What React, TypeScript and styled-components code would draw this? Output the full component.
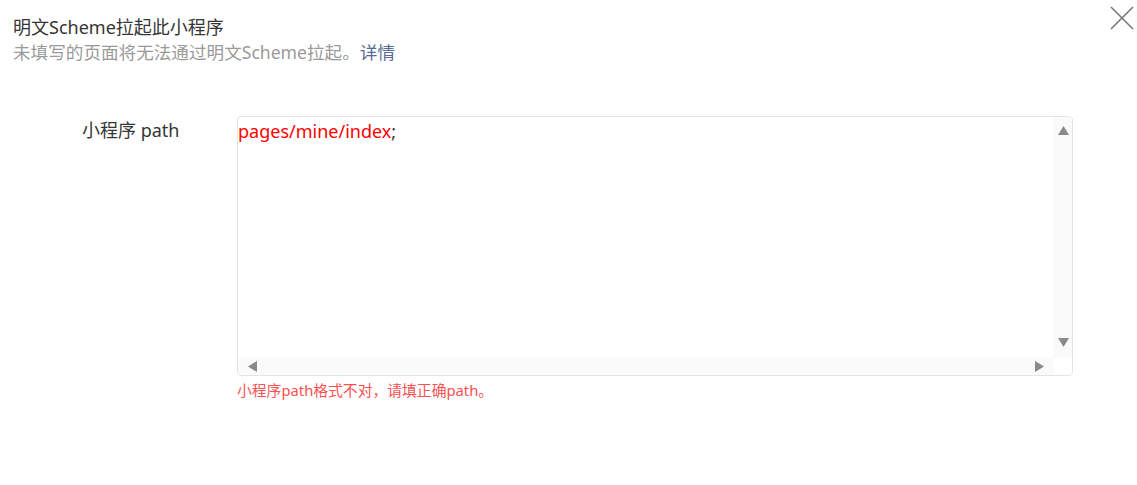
import React from "react";
import styled, { createGlobalStyle } from "styled-components";

const Global = createGlobalStyle`
  html, body { margin: 0; padding: 0; background: #fff; }
  body { font-family: "Noto Sans", "Noto Sans CJK SC", sans-serif; }
`;

const Page = styled.div`
  position: relative;
  width: 1137px;
  height: 485px;
  box-sizing: border-box;
  padding: 14px 0 0 13px;
`;

const Header = styled.header`
  display: flex;
  flex-direction: column;
`;

const Title = styled.h1`
  margin: 0;
  font-size: 18px;
  font-weight: 400;
  line-height: 26px;
  color: #353535;
`;

const Desc = styled.p`
  margin: 0;
  font-size: 17.6px;
  line-height: 25px;
  color: #9a9a9a;
`;

const Link = styled.a`
  color: #576b95;
  text-decoration: none;
`;

const Close = styled.button`
  position: absolute;
  top: 6px;
  right: 3px;
  width: 24px;
  height: 24px;
  padding: 0;
  border: none;
  background: none;
  cursor: pointer;
`;

const Form = styled.div`
  display: grid;
  grid-template-columns: 155px 836px;
  margin: 51px 0 0 69px;
`;

const Label = styled.label`
  font-size: 18px;
  line-height: 26px;
  color: #353535;
  padding-top: 1px;
`;

const Field = styled.div`
  display: flex;
  flex-direction: column;
`;

const Editor = styled.div`
  display: grid;
  grid-template-columns: 1fr 18px;
  grid-template-rows: 1fr 17px;
  height: 260px;
  box-sizing: border-box;
  border: 1px solid #e4e4e4;
  border-radius: 4px;
  overflow: hidden;
`;

const Content = styled.div`
  padding: 2px 0 0 0;
  font-size: 18px;
  line-height: 24px;
  color: #353535;
  white-space: pre;
`;

const Bad = styled.span`
  color: #ff0000;
`;

const VTrack = styled.div`
  display: flex;
  flex-direction: column;
  justify-content: space-between;
  align-items: center;
  background: #fafafa;
  padding: 9px 0 11px;
`;

const HTrack = styled.div`
  display: flex;
  justify-content: space-between;
  align-items: center;
  background: #fafafa;
  padding: 0 10px 0 10px;
`;

const Corner = styled.div`
  background: #fff;
`;

const Arrow = styled.svg`
  display: block;
  fill: #8a8a8a;
`;

const ErrorText = styled.div`
  margin-top: 4px;
  font-size: 14.8px;
  line-height: 20px;
  color: #fa5151;
`;

export default function App() {
  return (
    <>
      <Global />
      <Page>
        <Header>
          <Title>明文Scheme拉起此小程序</Title>
          <Desc>
            未填写的页面将无法通过明文Scheme拉起。<Link href="#">详情</Link>
          </Desc>
        </Header>
        <Close aria-label="关闭">
          <svg width="24" height="24" viewBox="0 0 24 24">
            <path d="M1 1 L23 23 M23 1 L1 23" stroke="#777" strokeWidth="1.6" fill="none" />
          </svg>
        </Close>
        <Form>
          <Label>小程序 path</Label>
          <Field>
            <Editor>
              <Content>
                <Bad>pages/mine/index</Bad>;
              </Content>
              <VTrack>
                <Arrow width="11" height="9" viewBox="0 0 11 9">
                  <polygon points="5.5,0 11,9 0,9" />
                </Arrow>
                <Arrow width="11" height="9" viewBox="0 0 11 9">
                  <polygon points="0,0 11,0 5.5,9" />
                </Arrow>
              </VTrack>
              <HTrack>
                <Arrow width="9" height="11" viewBox="0 0 9 11">
                  <polygon points="9,0 9,11 0,5.5" />
                </Arrow>
                <Arrow width="9" height="11" viewBox="0 0 9 11">
                  <polygon points="0,0 9,5.5 0,11" />
                </Arrow>
              </HTrack>
              <Corner />
            </Editor>
            <ErrorText>小程序path格式不对，请填正确path。</ErrorText>
          </Field>
        </Form>
      </Page>
    </>
  );
}
